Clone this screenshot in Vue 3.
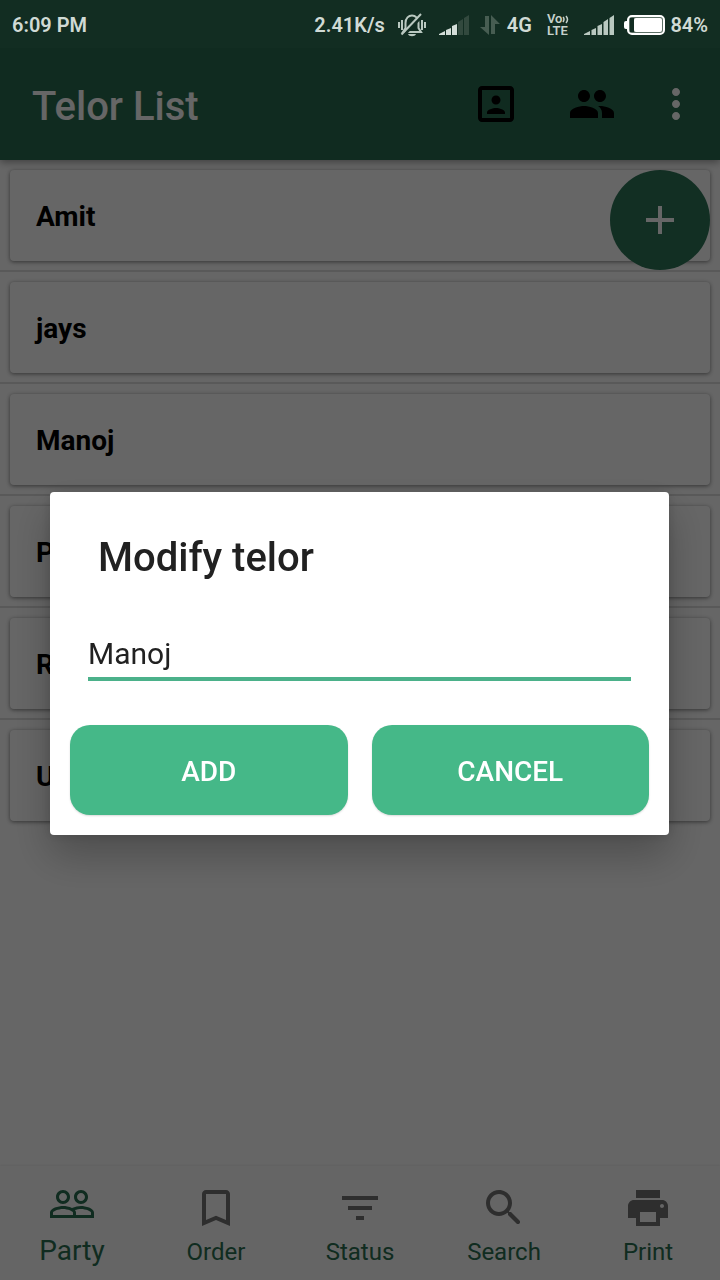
<script setup>
import { ref } from 'vue'

const telors = ['Amit', 'jays', 'Manoj', 'P', 'R', 'U']
const name = ref('Manoj')

const tabs = [
  {
    label: 'Party',
    active: true,
    icon: 'M16.5 13c-1.2 0-3.07.34-4.5 1-1.43-.67-3.3-1-4.5-1C5.33 13 1 14.08 1 16.25V19h22v-2.75c0-2.17-4.33-3.25-6.5-3.25zm-4 4.5h-10v-1.25c0-.54 2.56-1.75 5-1.75s5 1.21 5 1.75v1.25zm9 0H14v-1.25c0-.46-.2-.86-.52-1.22.88-.3 1.96-.53 3.02-.53 2.44 0 5 1.21 5 1.75v1.25zM7.5 12c1.93 0 3.5-1.57 3.5-3.5S9.43 5 7.5 5 4 6.57 4 8.5 5.57 12 7.5 12zm0-5.5c1.1 0 2 .9 2 2s-.9 2-2 2-2-.9-2-2 .9-2 2-2zm9 5.5c1.93 0 3.5-1.57 3.5-3.5S18.43 5 16.5 5 13 6.57 13 8.5s1.57 3.5 3.5 3.5zm0-5.5c1.1 0 2 .9 2 2s-.9 2-2 2-2-.9-2-2 .9-2 2-2z'
  },
  {
    label: 'Order',
    icon: 'M17 3H7c-1.1 0-2 .9-2 2v16l7-3 7 3V5c0-1.1-.9-2-2-2zm0 15l-5-2.18L7 18V5h10v13z'
  },
  { label: 'Status', icon: 'M10 18h4v-2h-4v2zM3 6v2h18V6H3zm3 7h12v-2H6v2z' },
  {
    label: 'Search',
    icon: 'M15.5 14h-.79l-.28-.27C15.41 12.59 16 11.11 16 9.5 16 5.91 13.09 3 9.5 3S3 5.91 3 9.5 5.91 16 9.5 16c1.61 0 3.09-.59 4.23-1.57l.27.28v.79l4.25 4.25c.41.41 1.08.41 1.49 0 .41-.41.41-1.08 0-1.49L15.5 14zm-6 0C7.01 14 5 11.99 5 9.5S7.01 5 9.5 5 14 7.01 14 9.5 11.99 14 9.5 14z'
  },
  {
    label: 'Print',
    icon: 'M19 8H5c-1.66 0-3 1.34-3 3v6h4v4h12v-4h4v-6c0-1.66-1.34-3-3-3zm-3 11H8v-5h8v5zm3-7c-.55 0-1-.45-1-1s.45-1 1-1 1 .45 1 1-.45 1-1 1zm-1-9H6v4h12V3z'
  }
]
</script>

<template>
  <div class="screen">
    <div class="status">
      <span>6:09 PM</span>
      <div class="status-right">
        <span>2.41K/s</span>
        <svg class="bell" width="30" height="26" viewBox="0 0 30 26" aria-label="Silent">
          <g fill="none" stroke="#b9c8c0" stroke-width="2">
            <path d="M6 20h18l-2.500-4v-5c0-10-13-10-13 0v5z" />
            <path d="M2 10v6M5 8v10M25 8v10M28 10v6" />
          </g>
          <path d="M11 22h8c-1 3-7 3-8 0z" fill="#b9c8c0" />
          <path d="M6 24 26 3" stroke="#122d22" stroke-width="3" />
          <path d="M4.500 22.500 24 2" stroke="#b9c8c0" stroke-width="2" />
        </svg>
        <svg width="30" height="20" viewBox="0 0 30 20" aria-label="Signal 3 of 5">
          <path d="M0 20v-1l6-3v4zM7 15l5-2v7H7zM13 11l5-2v11h-5z" fill="#d3ddd8" />
          <path d="M19 7l5-3v16h-5zM25 3l5-3v20h-5z" fill="#32493e" />
        </svg>
        <svg class="arrows" width="20" height="20" viewBox="0 0 20 20" aria-label="Data">
          <path d="M5 1h4v19L0 12h5zM11 0l9 9h-5v10h-4z" fill="#475d52" />
        </svg>
        <span class="net">4G</span>
        <span class="volte">
          <span class="vo">Vo<svg width="7" height="10" viewBox="0 0 7 10"><path d="M1 3q2 2 0 5M4 2q3 3.500 0 7" fill="none" stroke="#c6d2cc" stroke-width="1.500" /></svg></span>
          <span>LTE</span>
        </span>
        <svg class="sig" width="30" height="20" viewBox="0 0 30 20" aria-label="Signal 5 of 5">
          <path d="M0 20v-1l6-3v4zM7.500 15l4.500-2v7H7.500zM13.500 11l4.500-2v11h-4.500zM19.500 7l4.500-3v16h-4.500zM25.500 3l4.500-3v20h-4.500z" fill="#b9c8c0" />
        </svg>
        <svg class="battery" width="41" height="20" viewBox="0 0 41 20" aria-label="Battery">
          <rect x="4" y="1" width="36" height="18" rx="4" fill="#5d7066" stroke="#fff" stroke-width="2" />
          <path d="M3 6H2a2 2 0 0 0-2 2v4a2 2 0 0 0 2 2h1z" fill="#fff" />
          <path d="M6 3h4v14H6z" fill="#122d22" />
          <rect x="10" y="3" width="28" height="14" rx="2" fill="#fff" />
        </svg>
        <span>84%</span>
      </div>
    </div>

    <header class="appbar">
      <h1>Telor List</h1>
      <button class="action" aria-label="Contact">
        <svg class="icon" viewBox="0 0 24 24"><path d="M12 12.250c1.240 0 2.250-1.010 2.250-2.250S13.240 7.750 12 7.750 9.750 8.760 9.750 10s1.010 2.250 2.250 2.250zm4.500 4c0-1.500-3-2.250-4.500-2.250s-4.500.75-4.500 2.250V17h9v-.75zM19 3H5c-1.100 0-2 .9-2 2v14c0 1.100.9 2 2 2h14c1.100 0 2-.9 2-2V5c0-1.100-.9-2-2-2zm0 16H5V5h14v14z" /></svg>
      </button>
      <button class="action" aria-label="People">
        <svg class="icon" viewBox="0 0 24 24"><path d="M16 11c1.660 0 2.990-1.340 2.990-3S17.660 5 16 5c-1.660 0-3 1.340-3 3s1.340 3 3 3zm-8 0c1.660 0 2.990-1.340 2.990-3S9.660 5 8 5C6.340 5 5 6.340 5 8s1.340 3 3 3zm0 2c-2.330 0-7 1.170-7 3.500V19h14v-2.500c0-2.330-4.670-3.500-7-3.500zm8 0c-.29 0-.62.02-.97.05 1.160.84 1.970 1.970 1.970 3.450V19h6v-2.500c0-2.330-4.670-3.500-7-3.500z" /></svg>
      </button>
      <button class="action more" aria-label="More options">
        <svg class="icon" viewBox="0 0 24 24"><path d="M12 8c1.100 0 2-.9 2-2s-.9-2-2-2-2 .9-2 2 .9 2 2 2zm0 2c-1.100 0-2 .9-2 2s.9 2 2 2 2-.9 2-2-.9-2-2-2zm0 6c-1.100 0-2 .9-2 2s.9 2 2 2 2-.9 2-2-.9-2-2-2z" /></svg>
      </button>
    </header>

    <main class="content">
      <ul class="list">
        <li v-for="t in telors" :key="t"><div class="card">{{ t }}</div></li>
      </ul>
      <button class="fab" aria-label="New telor">
        <svg class="icon" viewBox="0 0 24 24"><path d="M19 13h-6v6h-2v-6H5v-2h6V5h2v6h6v2z" /></svg>
      </button>
    </main>

    <nav class="tabs">
      <a v-for="t in tabs" :key="t.label" href="#" :class="['tab', { active: t.active }]">
        <svg class="icon" viewBox="0 0 24 24"><path :d="t.icon" /></svg>
        <span>{{ t.label }}</span>
      </a>
    </nav>

    <div class="scrim">
      <form class="dialog" role="dialog" aria-labelledby="dialog-title" @submit.prevent>
        <h2 id="dialog-title"><label for="telor-name">Modify telor</label></h2>
        <input id="telor-name" v-model="name" type="text" />
        <div class="buttons">
          <button type="submit">ADD</button>
          <button type="button">CANCEL</button>
        </div>
      </form>
    </div>
  </div>
</template>

<style>
body {
  margin: 0;
  background: #666;
}
</style>

<style scoped>
* {
  box-sizing: border-box;
}
.screen {
  display: flex;
  flex-direction: column;
  min-height: 100vh;
  background: #fff;
  font-family: Roboto, 'Liberation Sans', sans-serif;
}
button {
  border: 0;
  padding: 0;
  background: none;
  font-family: inherit;
}
svg {
  display: block;
  flex: none;
}
.icon {
  width: 48px;
  height: 48px;
  fill: currentColor;
}
.status {
  position: relative;
  z-index: 3;
  display: flex;
  justify-content: space-between;
  align-items: center;
  height: 48px;
  padding: 2px 12px 0;
  background: #122d22;
  color: #d0dad5;
  font-size: 20px;
  line-height: 24px;
  font-weight: 600;
}
.status-right {
  display: flex;
  align-items: center;
}
.bell,
.sig {
  margin: 0 12px;
}
.arrows {
  margin: 0 7px 0 11px;
}
.battery {
  margin: 0 5px 0 -2px;
}
.volte {
  display: flex;
  flex-direction: column;
  margin: 0 3px 0 15px;
  font-size: 13px;
  line-height: 12px;
  color: #c6d2cc;
}
.vo {
  display: flex;
  align-items: center;
}
.appbar {
  position: relative;
  z-index: 1;
  display: flex;
  align-items: center;
  height: 112px;
  padding: 0 8px 0 32px;
  background: #296b50;
  color: #fff;
  box-shadow: 0 2px 8px rgba(0, 0, 0, 0.4);
}
h1 {
  flex: 1;
  margin: 6px 0 0;
  font-size: 40px;
  line-height: 48px;
  font-weight: 500;
}
.action {
  display: flex;
  justify-content: center;
  width: 96px;
  color: #000;
}
.more {
  width: 72px;
  color: #fff;
}
.content {
  position: relative;
  flex: 1;
}
.list {
  margin: 0;
  padding: 0;
  list-style: none;
}
.list li {
  padding: 10px 10px 9px;
  border-bottom: 2px solid #dedede;
}
.list li:last-child {
  border-bottom: 0;
}
.card {
  padding: 30px 26px 28px;
  border-radius: 4px;
  background: #fff;
  box-shadow: 0 1px 4px rgba(0, 0, 0, 0.5);
  color: #000;
  font-size: 28px;
  line-height: 33px;
  font-weight: 700;
}
.fab {
  position: absolute;
  top: 10px;
  right: 10px;
  display: flex;
  align-items: center;
  justify-content: center;
  width: 100px;
  height: 100px;
  border-radius: 50%;
  background: #2e7558;
  color: #fff;
}
.tabs {
  display: flex;
  height: 114px;
  background: #fcfcfc;
  box-shadow: 0 -1px 2px rgba(0, 0, 0, 0.06);
}
.tab {
  flex: 1;
  display: flex;
  flex-direction: column;
  align-items: center;
  justify-content: space-between;
  padding: 18px 0 14px;
  color: #2a6e50;
  font-size: 24px;
  line-height: 28px;
  text-decoration: none;
}
.tab .icon {
  color: #737373;
}
.tab.active {
  padding: 14px 0 13px;
  font-size: 28px;
  line-height: 32px;
}
.tab.active .icon {
  color: #2a6e50;
}
.scrim {
  position: fixed;
  inset: 0;
  z-index: 2;
  display: flex;
  align-items: center;
  padding: 46px 51px 0 50px;
  background: rgba(0, 0, 0, 0.6);
}
.dialog {
  flex: 1;
  padding: 37px 20px 20px;
  border-radius: 4px;
  background: #fff;
  box-shadow: 0 20px 40px rgba(0, 0, 0, 0.25), 0 0 12px rgba(0, 0, 0, 0.15);
}
h2 {
  margin: 0 28px 46px;
  color: #212121;
  font-size: 40px;
  line-height: 58px;
  font-weight: 500;
}
.dialog input {
  display: block;
  width: calc(100% - 36px);
  height: 48px;
  margin: 0 18px 44px;
  padding: 0 0 2px;
  border: 0;
  border-bottom: 4px solid #4bb18a;
  outline: 0;
  background: none;
  color: #212121;
  font-family: inherit;
  font-size: 30px;
}
.buttons {
  display: flex;
  gap: 24px;
}
.buttons button {
  flex: 1;
  height: 90px;
  padding: 3px 0 0;
  border-radius: 20px;
  background: #45b888;
  box-shadow: 0 1px 2px rgba(0, 0, 0, 0.15);
  color: #fff;
  font-size: 28px;
  font-weight: 500;
}
</style>
